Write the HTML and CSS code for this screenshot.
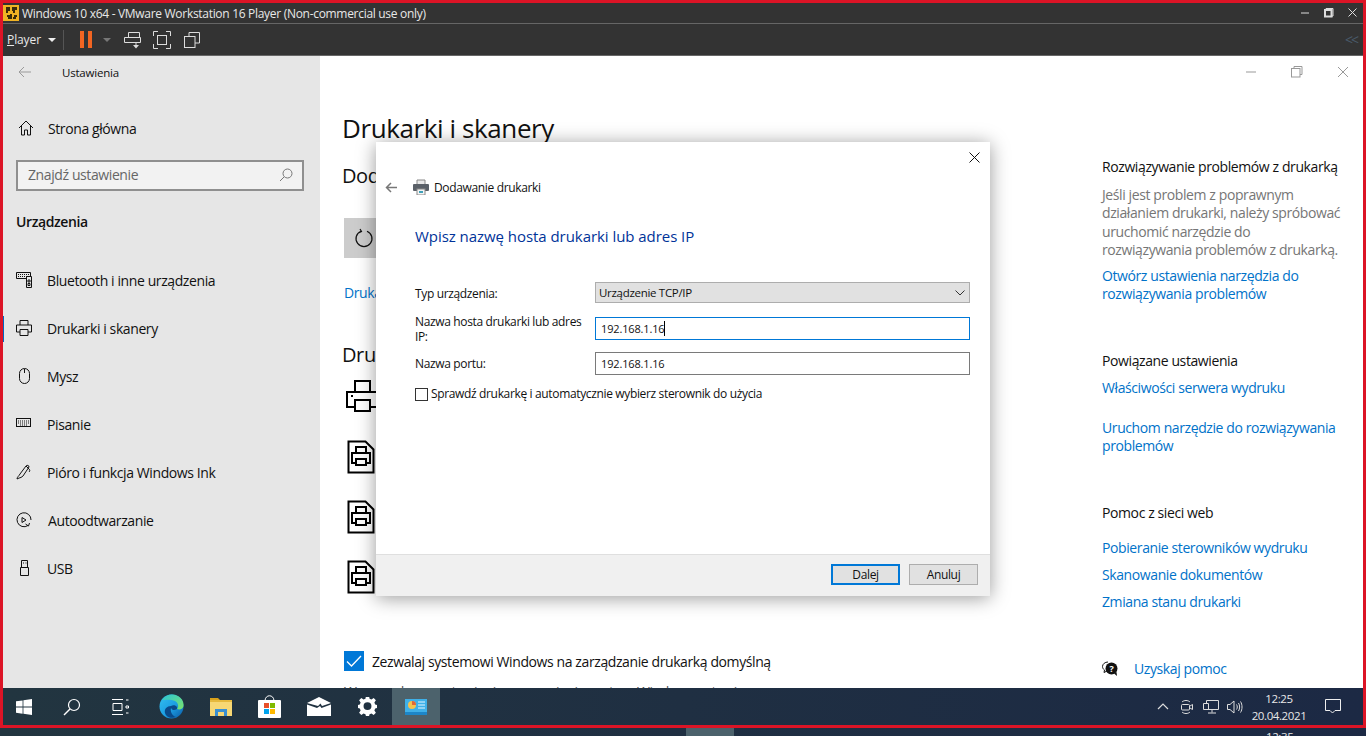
FILE: index.html
```html
<!DOCTYPE html>
<html lang="pl">
<head>
  <meta charset="UTF-8" />
  <title>Drukarki i skanery</title>
  <link rel="stylesheet" href="styles.css">
</head>
<body>
  <div class="frame">
    <div class="titlebar">
      <svg class="vm-logo" width="16" height="16" viewBox="0 0 16 16"><rect width="16" height="16" fill="#f0b323"/><path d="M3 2h4v4h-2v2h-2zM9 2h5v3h-2v3h-2v-2h-1zM4 10h3v-1h2v5h-4v-2h-1zM11 10h3v2h-1v2h-3v-2h1z" fill="#3a2c0a"/></svg>
      <span class="title-text">Windows 10 x64 - VMware Workstation 16 Player (Non-commercial use only)</span>
      <svg class="win-btn" width="12" height="12" viewBox="0 0 12 12"><path d="M2 6h8" stroke="#ddd" stroke-width="1"/></svg>
      <svg class="win-btn" width="12" height="12" viewBox="0 0 12 12"><path d="M3 3V1.500h7V9H8.500" stroke="#ddd" fill="none"/><rect x="2" y="3" width="6.500" height="6.500" stroke="#ddd" stroke-width="2" fill="none"/></svg>
      <svg class="win-btn" width="12" height="12" viewBox="0 0 12 12"><path d="M1.500 1.500l8 8M9.500 1.500l-8 8" stroke="#ddd" fill="none"/></svg>
    </div>
    <div class="title-line"></div>
    <div class="toolbar">
      <span class="player-menu"><u>P</u>layer</span>
      <span class="caret"></span>
      <span class="tool-divider"></span>
      <span class="pause"><i></i><i></i></span>
      <span class="caret caret-dim"></span>
      <svg class="tool-icon tool-send" width="17" height="18" viewBox="0 0 17 18"><path d="M4.500 1.500h11v5h-11zM.5 6.500h16v5H.5zM12 12v2" stroke="#ddd" fill="none"/><path d="M9 14h6l-3 3.500z" fill="#ddd"/></svg>
      <svg class="tool-icon tool-full" width="18" height="18" viewBox="0 0 18 18"><path d="M.5 5V.5H5M13 .5h4.500V5M17.500 13v4.500H13M5 17.500H.5V13" stroke="#ddd" fill="none"/><rect x="4.500" y="4.500" width="9" height="9" stroke="#ddd" fill="none"/></svg>
      <svg class="tool-icon tool-unity" width="16" height="16" viewBox="0 0 16 16"><path d="M5 4.500V.5h10.500v10.500H11" stroke="#ddd" fill="none"/><rect x=".5" y="4.500" width="10.500" height="11" stroke="#ddd" fill="none"/></svg>
      <span class="collapse">&lt;&lt;</span>
    </div>
    <div class="toolbar-line"></div>

    <div class="settings">
      <nav class="sidebar">
        <div class="side-head">
          <svg width="14" height="12" viewBox="0 0 14 12"><path d="M13 6H1M6 1L1 6l5 5" stroke="#9a9a9a" fill="none"/></svg>
          <span>Ustawienia</span>
        </div>
        <div class="side-home">
          <svg width="16" height="16" viewBox="0 0 16 16"><path d="M1 8l7-7 7 7M3.500 6v9h3v-5h3v5h3V6" stroke="#111" fill="none"/></svg>
          <span>Strona główna</span>
        </div>
        <div class="side-search">
          <span>Znajdź ustawienie</span>
          <svg width="14" height="14" viewBox="0 0 14 14"><circle cx="8.500" cy="5.500" r="4.500" stroke="#777" fill="none"/><path d="M5 9l-4 4" stroke="#777" fill="none"/></svg>
        </div>
        <div class="side-group">Urządzenia</div>
        <ul class="side-list">
          <li>
            <svg width="16" height="16" viewBox="0 0 16 16"><path d="M.5.500h14v4h-4v2h-10zM10.500 4.500h5v11h-5zM12 8h2v2h-2zM12 11.500h2v2h-2z" stroke="#111" fill="none"/><path d="M2 2.500h11M2 4.500h7" stroke="#111" stroke-dasharray="1 1"/></svg>
            <span>Bluetooth i inne urządzenia</span>
          </li>
          <li class="active">
            <svg width="16" height="16" viewBox="0 0 16 16"><path d="M4 5V.5h8V5M4 12H.5V5h15v7H12M4 9.500h8v6H4z" stroke="#111" fill="none"/></svg>
            <span>Drukarki i skanery</span>
          </li>
          <li>
            <svg width="16" height="16" viewBox="0 0 16 16"><rect x="3.500" y=".5" width="10" height="15" rx="5" stroke="#111" fill="none"/><path d="M8.500 1v4" stroke="#111"/></svg>
            <span>Mysz</span>
          </li>
          <li>
            <svg width="16" height="16" viewBox="0 0 16 16"><rect x=".5" y="2.500" width="14" height="8" stroke="#111" fill="none"/><path d="M2 5h11M2 7h11M4 9h7" stroke="#111" stroke-dasharray="1 1"/></svg>
            <span>Pisanie</span>
          </li>
          <li>
            <svg width="16" height="16" viewBox="0 0 16 16"><path d="M1 15c0-2 2-3 3-5l6-8c1-1 3-1 3 1l-6 9c-1 1-3 2-4 2zM10 2l3 3c1 1 1 2 0 3" stroke="#111" fill="none"/></svg>
            <span>Pióro i funkcja Windows Ink</span>
          </li>
          <li>
            <svg width="16" height="16" viewBox="0 0 16 16"><path d="M12 13.500A7 7 0 1 1 15 8M9.500 12l3 2 1-3M6 5.500v5l4-2.500z" stroke="#111" fill="none"/></svg>
            <span class="autoplay">Autoodtwarzanie</span>
          </li>
          <li>
            <svg width="16" height="16" viewBox="0 0 16 16"><path d="M4.500 7.500h8v8h-8zM5.500 7.500V.5h6v7M7 3h1M9.500 3h1" stroke="#111" fill="none"/></svg>
            <span>USB</span>
          </li>
        </ul>
      </nav>

      <div class="pane">
        <div class="pane-controls">
          <svg width="12" height="12" viewBox="0 0 12 12"><path d="M1 6h10" stroke="#999"/></svg>
          <svg width="12" height="12" viewBox="0 0 12 12"><path d="M3 2.500V.5h8v8H9" stroke="#999" fill="none"/><rect x=".5" y="2.500" width="8.500" height="8.500" stroke="#999" fill="none"/></svg>
          <svg width="12" height="12" viewBox="0 0 12 12"><path d="M1 1l10 10M11 1L1 11" stroke="#999" fill="none"/></svg>
        </div>
        <div class="pane-body">
          <main class="content">
            <h1>Drukarki i skanery</h1>
            <h2>Dodaj drukarki i skanery</h2>
            <div class="refresh">
              <svg width="20" height="20" viewBox="0 0 20 20"><path d="M7 3.200A8 8 0 1 0 13 3.200M6 1l1.500 2.500L4.500 5" stroke="#111" fill="none" stroke-width="1.200"/></svg>
            </div>
            <a class="blue-link main-link">Drukarki, której szukam, nie ma na liście</a>
            <h2 class="second">Drukarki i skanery</h2>
            <div class="printers">
              <div class="printer-row">
                <svg width="34" height="34" viewBox="0 0 34 34"><path d="M9 12V1h15v11M9 27H1V12h32v15h-9M9 20h15v11H9zM5 16h2" stroke="#000" stroke-width="2" fill="none"/></svg>
              </div>
              <div class="printer-row">
                <svg width="28" height="34" viewBox="0 0 28 34"><path d="M1.500 1.500h17l8 8v23h-25zM9 13V7h10v6M9 23H5V13h18v10h-4M9 19h10v6H9z" stroke="#000" stroke-width="2" fill="none"/></svg>
              </div>
              <div class="printer-row">
                <svg width="28" height="34" viewBox="0 0 28 34"><path d="M1.500 1.500h17l8 8v23h-25zM9 13V7h10v6M9 23H5V13h18v10h-4M9 19h10v6H9z" stroke="#000" stroke-width="2" fill="none"/></svg>
              </div>
              <div class="printer-row">
                <svg width="28" height="34" viewBox="0 0 28 34"><path d="M1.500 1.500h17l8 8v23h-25zM9 13V7h10v6M9 23H5V13h18v10h-4M9 19h10v6H9z" stroke="#000" stroke-width="2" fill="none"/></svg>
              </div>
            </div>
            <div class="check-row">
              <span class="check-box"><svg width="20" height="20" viewBox="0 0 20 20"><path d="M3 10.500l4.500 4.500L17 5" stroke="#fff" stroke-width="1.300" fill="none"/></svg></span>
              <span>Zezwalaj systemowi Windows na zarządzanie drukarką domyślną</span>
            </div>
            <p class="check-note">Wprowadzone ustawienia oznaczają, że system Windows ustawi</p>
          </main>

          <aside class="aside">
            <h3>Rozwiązywanie problemów z drukarką</h3>
            <p>Jeśli jest problem z poprawnym działaniem drukarki, należy spróbować uruchomić narzędzie do rozwiązywania problemów z drukarką.</p>
            <a class="blue-link">Otwórz ustawienia narzędzia do rozwiązywania problemów</a>
            <h3 class="gap-head">Powiązane ustawienia</h3>
            <a class="blue-link">Właściwości serwera wydruku</a>
            <a class="blue-link gap-link">Uruchom narzędzie do rozwiązywania problemów</a>
            <h3 class="gap-head web-head">Pomoc z sieci web</h3>
            <a class="blue-link">Pobieranie sterowników wydruku</a>
            <a class="blue-link web-next">Skanowanie dokumentów</a>
            <a class="blue-link web-next">Zmiana stanu drukarki</a>
            <div class="help-row">
              <svg width="16" height="16" viewBox="0 0 16 16"><path d="M6 1C3 1 .5 3 .5 5.500c0 1.500.8 2.700 2 3.500L2 11.500 5 10" stroke="#111" fill="none"/><circle cx="9.500" cy="7.500" r="6" fill="#111"/><path d="M12 12.500l3 2.500-.5-4z" fill="#111"/><text x="9.500" y="10.500" class="help-mark" text-anchor="middle">?</text></svg>
              <a class="blue-link">Uzyskaj pomoc</a>
            </div>
          </aside>
        </div>
      </div>

      <section class="dialog">
        <div class="dialog-close">
          <svg width="11" height="11" viewBox="0 0 11 11"><path d="M.5.500l10 10M10.500.500l-10 10" stroke="#111" fill="none"/></svg>
        </div>
        <div class="dialog-head">
          <svg width="13" height="11" viewBox="0 0 13 11"><path d="M12 5.500H2M6 1L1.500 5.500 6 10" stroke="#777" stroke-width="1.500" fill="none"/></svg>
          <svg class="dialog-printer" width="16" height="16" viewBox="0 0 16 16"><path d="M4 1h8v5H4z" fill="#e8e8e8" stroke="#888"/><rect y="5" width="16" height="7" rx="1" fill="#5a6068"/><rect x="4" y="10" width="8" height="6" fill="#f4f4f4" stroke="#888"/><rect x="6" y="12" width="4" height="2" fill="#3fa0b8"/></svg>
          <span>Dodawanie drukarki</span>
        </div>
        <div class="dialog-title">Wpisz nazwę hosta drukarki lub adres IP</div>
        <div class="dialog-form">
          <label class="form-label">Typ urządzenia:</label>
          <div class="combo"><span>Urządzenie TCP/IP</span><svg width="10" height="6" viewBox="0 0 10 6"><path d="M.5.500L5 5 9.500.5" stroke="#333" fill="none"/></svg></div>
          <label class="form-label">Nazwa hosta drukarki lub adres IP:</label>
          <div class="field field-focus"><span class="caret-line">192.168.1.16</span></div>
          <label class="form-label">Nazwa portu:</label>
          <div class="field">192.168.1.16</div>
        </div>
        <div class="dialog-check"><span class="small-box"></span><span>Sprawdź drukarkę i automatycznie wybierz sterownik do użycia</span></div>
        <div class="dialog-foot">
          <button class="dlg-btn dlg-default">Dalej</button>
          <button class="dlg-btn">Anuluj</button>
        </div>
      </section>
    </div>

    <div class="taskbar">
      <div class="task-btn task-start">
        <svg width="16" height="16" viewBox="0 0 16 16"><path d="M0 2.300l6.600-.9v6.200H0zM7.400 1.300L16 0v7.600H7.400zM0 8.400h6.600v6.300L0 13.800zM7.400 8.400H16V16l-8.600-1.200z" fill="#fff"/></svg>
      </div>
      <div class="task-btn">
        <svg width="18" height="18" viewBox="0 0 18 18"><circle cx="11" cy="7" r="5.500" stroke="#fff" stroke-width="1.200" fill="none"/><path d="M7 11l-6 6" stroke="#fff" stroke-width="1.500"/></svg>
      </div>
      <div class="task-btn">
        <svg width="17" height="16" viewBox="0 0 17 16"><path d="M0 .5h11M0 15.500h11M1 4.500h9v7H1zM14 1h2.500M14 7h2.500v2H14zM14 14h2.500" stroke="#fff" fill="none"/></svg>
      </div>
      <div class="task-btn task-pin">
        <svg width="25" height="25" viewBox="0 0 25 25"><defs><linearGradient id="edgeA" x1="0" y1="0" x2="1" y2="1"><stop offset="0" stop-color="#35c1f1"/><stop offset=".55" stop-color="#1b9de2"/><stop offset="1" stop-color="#0c59a4"/></linearGradient><linearGradient id="edgeB" x1="0" y1="0" x2="1" y2="1"><stop offset="0" stop-color="#2bc5d6"/><stop offset="1" stop-color="#7ce36b"/></linearGradient></defs><circle cx="12.500" cy="12.500" r="12" fill="url(#edgeA)"/><path d="M3 6C6 1 13 -1 19 2c4 2 6 6 5.500 10-.5 3-3.500 4-6.500 3 2-2 1.500-6-2-8C12 5 6 6 3 6z" fill="url(#edgeB)"/><path d="M12 12c3-2 7 0 6 3-3 2-5 1-6-1-1 3 1 8 5 9-5 2-10 0-11-4-1-4 2-7 6-7z" fill="#0a4a8a"/></svg>
      </div>
      <div class="task-btn task-pin">
        <svg width="22" height="19" viewBox="0 0 22 19"><path d="M0 1h8l2 2h-10z" fill="#d9a21b"/><rect y="3" width="22" height="16" fill="#f7d774"/><rect y="3" width="22" height="2" fill="#e6b93d"/><path d="M5 19v-7h12v7h-3v-4H8v4z" fill="#3a8fd0"/></svg>
      </div>
      <div class="task-btn task-pin">
        <svg width="23" height="23" viewBox="0 0 23 23"><path d="M7 6c0-7 9-7 9 0" stroke="#fff" fill="none"/><path d="M1 5h21a1 1 0 0 1 1 1v16a1 1 0 0 1-1 1H1a1 1 0 0 1-1-1V6a1 1 0 0 1 1-1z" fill="#fff"/><rect x="6" y="8" width="5" height="5" fill="#e8502a"/><rect x="12" y="8" width="5" height="5" fill="#7fba00"/><rect x="6" y="14" width="5" height="5" fill="#00a4ef"/><rect x="12" y="14" width="5" height="5" fill="#ffb900"/></svg>
      </div>
      <div class="task-btn task-pin">
        <svg width="24" height="19" viewBox="0 0 24 19"><path d="M0 6L12 0l12 6-9 3-1.500-2.500L11 9z" fill="#fff"/><path d="M0 7.500L10 11l3-2 1.500 2L24 7.500V19H0z" fill="#fff"/></svg>
      </div>
      <div class="task-btn task-pin">
        <svg width="19" height="19" viewBox="0 0 24 24"><path fill="#fff" fill-rule="evenodd" d="M10 0h4l.6 3.300 2.400 1 2.800-1.900 2.800 2.800L20.700 8l1 2.400L24 11v4l-2.300.6-1 2.400 1.900 2.800-2.800 2.800-2.800-1.900-2.400 1-.6 2.300h-4l-.6-2.300-2.400-1-2.800 1.900-2.800-2.800L3.300 18l-1-2.400L0 15v-4l2.300-.6 1-2.400-1.900-2.800 2.800-2.800L7 4.300l2.400-1zM12 7.500a5 5 0 1 0 0 10 5 5 0 0 0 0-10z" transform="translate(0 -1)"/></svg>
      </div>
      <div class="task-btn task-active">
        <svg width="22" height="16" viewBox="0 0 22 16"><rect width="22" height="16" fill="#3fb0e8"/><circle cx="7" cy="6" r="4" fill="#f5c24c"/><path d="M7 6V2a4 4 0 0 1 4 4z" fill="#e0663a"/><path d="M13 3h7M13 6h7M13 9h7" stroke="#e8f6ff"/><rect y="13" width="22" height="3" fill="#1d86c8"/></svg>
      </div>
      <div class="tray">
        <svg width="12" height="7" viewBox="0 0 12 7"><path d="M1 6l5-5 5 5" stroke="#ddd" stroke-width="1.200" fill="none"/></svg>
        <svg width="12" height="16" viewBox="0 0 12 16"><path d="M1 3c2-2 6-2 8 0M1 13c2 2 6 2 8 0" stroke="#ddd" fill="none"/><rect x=".5" y="5.500" width="8" height="5.500" rx="1" stroke="#ddd" fill="none"/><path d="M9 7l2.500-1.500v5L9 9" stroke="#ddd" fill="none"/></svg>
        <svg width="16" height="14" viewBox="0 0 16 14"><path d="M3.500 3V.5h12v9H3M9 9.500v3M5 13h8M.5 3.500h5v6h-5z" stroke="#ddd" fill="none"/></svg>
        <svg width="16" height="14" viewBox="0 0 16 14"><path d="M.5 4.500h2.500L7 1v12L3 9.500H.5zM9.500 4.500c1 1.500 1 3.500 0 5M11.500 3c1.500 2.500 1.500 5.500 0 8M13.500 1.500c2 3 2 8 0 11" stroke="#ddd" fill="none"/></svg>
      </div>
      <div class="clock"><span>12:25</span><span>20.04.2021</span></div>
      <div class="notify">
        <svg width="16" height="15" viewBox="0 0 16 15"><path d="M.5.500h15v11H10L7.500 14 5 11.500H.5z" stroke="#eee" fill="none"/></svg>
      </div>
    </div>
  </div>
  <div class="under">
    <span class="under-tab"></span>
    <span class="under-clock">12:35</span>
  </div>
</body>
</html>
```

FILE: styles.css
```css
* {
  box-sizing: border-box;
}

html, body {
  margin: 0;
  height: 736px;
  overflow: hidden;
}

body {
  font-family: "Open Sans", sans-serif;
  font-size: 14px;
  letter-spacing: -.4px;
  background: linear-gradient(to right, #223540, #1c2944);
  color: #111;
}

svg {
  display: block;
  flex: none;
}

h1, h2, h3, p, ul {
  margin: 0;
  padding: 0;
  font-weight: 400;
}

.frame {
  height: 728px;
  border: 3px solid #dc1426;
  background: #333;
  display: flex;
  flex-direction: column;
}

/* player chrome */
.titlebar {
  height: 20px;
  display: flex;
  align-items: center;
  color: #e8e8e8;
  font-size: 12px;
}

.title-text {
  margin-left: 3px;
  flex: 1;
  letter-spacing: -.3px;
}

.win-btn {
  margin-left: 12px;
}
.win-btn:last-child {
  margin-right: 4px;
}

.title-line {
  height: 1px;
  background: #666;
}

.toolbar {
  height: 31px;
  display: flex;
  align-items: center;
  padding-left: 4px;
  color: #e8e8e8;
  font-size: 12px;
  letter-spacing: -.1px;
}

.caret {
  width: 0;
  height: 0;
  margin-left: 7px;
  border: 4px solid transparent;
  border-top: 4px solid #eee;
  border-bottom: 0;
}

.caret-dim {
  margin-left: 11px;
  border-top-color: #777;
}

.tool-divider {
  width: 1px;
  height: 20px;
  margin-left: 7px;
  background: #555;
}

.pause {
  display: flex;
  gap: 4px;
  margin-left: 16px;
}
.pause i {
  width: 4px;
  height: 17px;
  background: #f26522;
}

.tool-send {
  margin-left: 13px;
}
.tool-full {
  margin-left: 12px;
}
.tool-unity {
  margin-left: 13px;
}

.collapse {
  margin-left: auto;
  margin-right: 6px;
  color: #4a5a6a;
  font-size: 14px;
  letter-spacing: -2px;
}

.toolbar-line {
  height: 1px;
  margin-left: 57px;
  background: #666;
}

/* settings window */
.settings {
  position: relative;
  height: 632px;
  display: flex;
  background: #fff;
  overflow: hidden;
}

.sidebar {
  flex: none;
  width: 317px;
  background: #e6e6e6;
}

.side-head {
  height: 32px;
  display: flex;
  align-items: center;
  padding-left: 15px;
  font-size: 11.500px;
  letter-spacing: -.2px;
}
.side-head span {
  margin-left: 30px;
}

.side-home {
  height: 48px;
  margin-top: 17px;
  display: flex;
  align-items: center;
  padding: 0 0 2px 15px;
}
.side-home span {
  margin-left: 14px;
}

.side-search {
  height: 31px;
  width: 288px;
  margin: 7px 0 0 13px;
  padding: 0 9px 2px 10px;
  display: flex;
  align-items: center;
  justify-content: space-between;
  border: 2px solid #8f8f8f;
  background: #f2f2f2;
  color: #666;
}

.side-group {
  margin: 21px 0 0 13px;
  line-height: 20px;
  font-weight: 600;
}

.side-list {
  margin-top: 25px;
  list-style: none;
}
.side-list li {
  height: 48px;
  display: flex;
  align-items: center;
  padding: 0 0 2px 13px;
  gap: 15px;
}
.side-list li.active {
  position: relative;
}
.side-list li.active::before {
  content: "";
  position: absolute;
  left: 0;
  top: 11px;
  width: 1px;
  height: 26px;
  background: #0067c0;
}
.autoplay {
  margin-left: 1px;
}

.pane {
  flex: 1;
  min-width: 0;
  display: flex;
  flex-direction: column;
}

.pane-controls {
  flex: none;
  height: 32px;
  display: flex;
  align-items: center;
  justify-content: flex-end;
  gap: 34px;
  padding-right: 14px;
}

.pane-body {
  flex: 1;
  display: flex;
}

.content {
  flex: none;
  width: 782px;
  padding-left: 22px;
}

h1 {
  margin-top: 20px;
  font-size: 26px;
  line-height: 40px;
}

h2 {
  margin-top: 14px;
  font-size: 20px;
  line-height: 28px;
}
h2.second {
  margin-top: 39px;
}

.refresh {
  width: 40px;
  height: 40px;
  margin: 28px 0 0 2px;
  display: flex;
  align-items: center;
  justify-content: center;
  background: #ccc;
}

.blue-link {
  display: block;
  color: #0072c9;
  line-height: 18px;
}

.main-link {
  margin: 26px 0 0 2px;
}

.printers {
  margin: -2px 0 0 2px;
}
.printer-row {
  height: 60px;
  display: flex;
  align-items: center;
  padding-left: 2px;
}
.printer-row + .printer-row {
  padding-left: 3px;
}

.check-row {
  margin: 44px 0 0 2px;
  display: flex;
  align-items: center;
  gap: 8px;
}
.check-box {
  width: 20px;
  height: 20px;
  background: #0078d7;
}

.check-note {
  margin: 11px 0 0 2px;
  line-height: 20px;
  color: #555;
}

.aside {
  flex: 1;
  padding-top: 69px;
}
.aside h3 {
  font-size: 14px;
  line-height: 20px;
}
.aside p {
  margin: 9px 0 8px;
  width: 240px;
  color: #767676;
  line-height: 18.300px;
}
.aside .gap-head {
  margin-top: 48px;
  margin-bottom: 8px;
}
.aside .web-head {
  margin-bottom: 16px;
}
.aside .blue-link {
  width: 240px;
}
.gap-link {
  margin-top: 22px;
}
.web-next {
  margin-top: 9px;
}

.help-row {
  margin-top: 49px;
  display: flex;
  align-items: center;
  gap: 16px;
}
.help-mark {
  font-size: 9px;
  font-weight: 700;
  fill: #fff;
}

/* add printer dialog, floats over the settings page */
.dialog {
  position: absolute;
  left: 373px;
  top: 86px;
  width: 614px;
  height: 454px;
  background: #fff;
  font-size: 12px;
  letter-spacing: -.35px;
  box-shadow: 0 2px 18px rgba(0, 0, 0, .4);
  display: flex;
  flex-direction: column;
}

.dialog-close {
  position: absolute;
  right: 10px;
  top: 10px;
}

.dialog-head {
  margin-top: 38px;
  height: 14px;
  display: flex;
  align-items: center;
  padding-left: 9px;
}
.dialog-printer {
  margin-left: 15px;
}
.dialog-head span {
  margin-left: 5px;
}

.dialog-title {
  margin: 30px 0 0 39px;
  color: #003399;
  font-size: 15px;
  letter-spacing: -.05px;
  line-height: 24px;
}

.dialog-form {
  margin: 34px 20px 0 39px;
  display: grid;
  grid-template-columns: 180px 1fr;
  grid-template-rows: 23px 23px 23px;
  row-gap: 12px;
  align-items: center;
}

.form-label {
  line-height: 15px;
  padding-right: 10px;
}

.combo {
  height: 21px;
  align-self: start;
  display: flex;
  align-items: center;
  justify-content: space-between;
  padding: 0 4px 0 3px;
  border: 1px solid #adadad;
  background: #e1e1e1;
  font-size: 11.500px;
  letter-spacing: -.3px;
}

.field {
  height: 23px;
  display: flex;
  align-items: center;
  padding-left: 5px;
  border: 1px solid #7a7a7a;
  font-size: 11px;
  letter-spacing: -.15px;
}
.field-focus {
  border-color: #0078d7;
}
.caret-line {
  border-right: 1px solid #000;
}

.dialog-check {
  margin: 11px 0 0 39px;
  display: flex;
  align-items: center;
  gap: 3px;
  line-height: 16px;
}
.small-box {
  width: 13px;
  height: 13px;
  border: 1px solid #333;
}

.dialog-foot {
  margin-top: auto;
  height: 42px;
  display: flex;
  justify-content: flex-end;
  align-items: flex-start;
  gap: 9px;
  padding: 9px 12px 0 0;
  border-top: 1px solid #dfdfdf;
  background: #f0f0f0;
}

.dlg-btn {
  width: 69px;
  height: 21px;
  padding: 0;
  font: inherit;
  letter-spacing: inherit;
  color: #111;
  background: #e1e1e1;
  border: 1px solid #adadad;
}
.dlg-default {
  border: 2px solid #0078d7;
}

/* windows taskbar */
.taskbar {
  height: 37px;
  display: flex;
  background: linear-gradient(to right, #223540, #1c2944);
}

.task-btn {
  width: 48px;
  display: flex;
  align-items: center;
  justify-content: center;
}
.task-start {
  width: 42px;
  margin-right: 3px;
}
.task-pin {
  width: 49px;
}
.task-pin:nth-child(4) {
  margin-left: 3px;
}
.task-active {
  background: #4c626c;
}

.tray {
  margin-left: auto;
  display: flex;
  align-items: center;
  gap: 8px;
}
.tray svg:nth-child(1) {
  margin-right: 4px;
}
.tray svg:nth-child(2) {
  margin-right: 2px;
}

.clock {
  width: 70px;
  padding-left: 2px;
  display: flex;
  flex-direction: column;
  align-items: center;
  justify-content: center;
  color: #e8e8e8;
  font-size: 11.500px;
  line-height: 17px;
}

.notify {
  width: 40px;
  display: flex;
  align-items: center;
  justify-content: center;
  margin-right: 10px;
}

.under {
  height: 8px;
  display: flex;
  overflow: hidden;
  color: #e8e8e8;
  font-size: 11.500px;
}
.under-tab {
  width: 48px;
  margin-left: 686px;
  background: #4c626c;
}
.under-clock {
  margin: 1px 0 0 532px;
}
```
